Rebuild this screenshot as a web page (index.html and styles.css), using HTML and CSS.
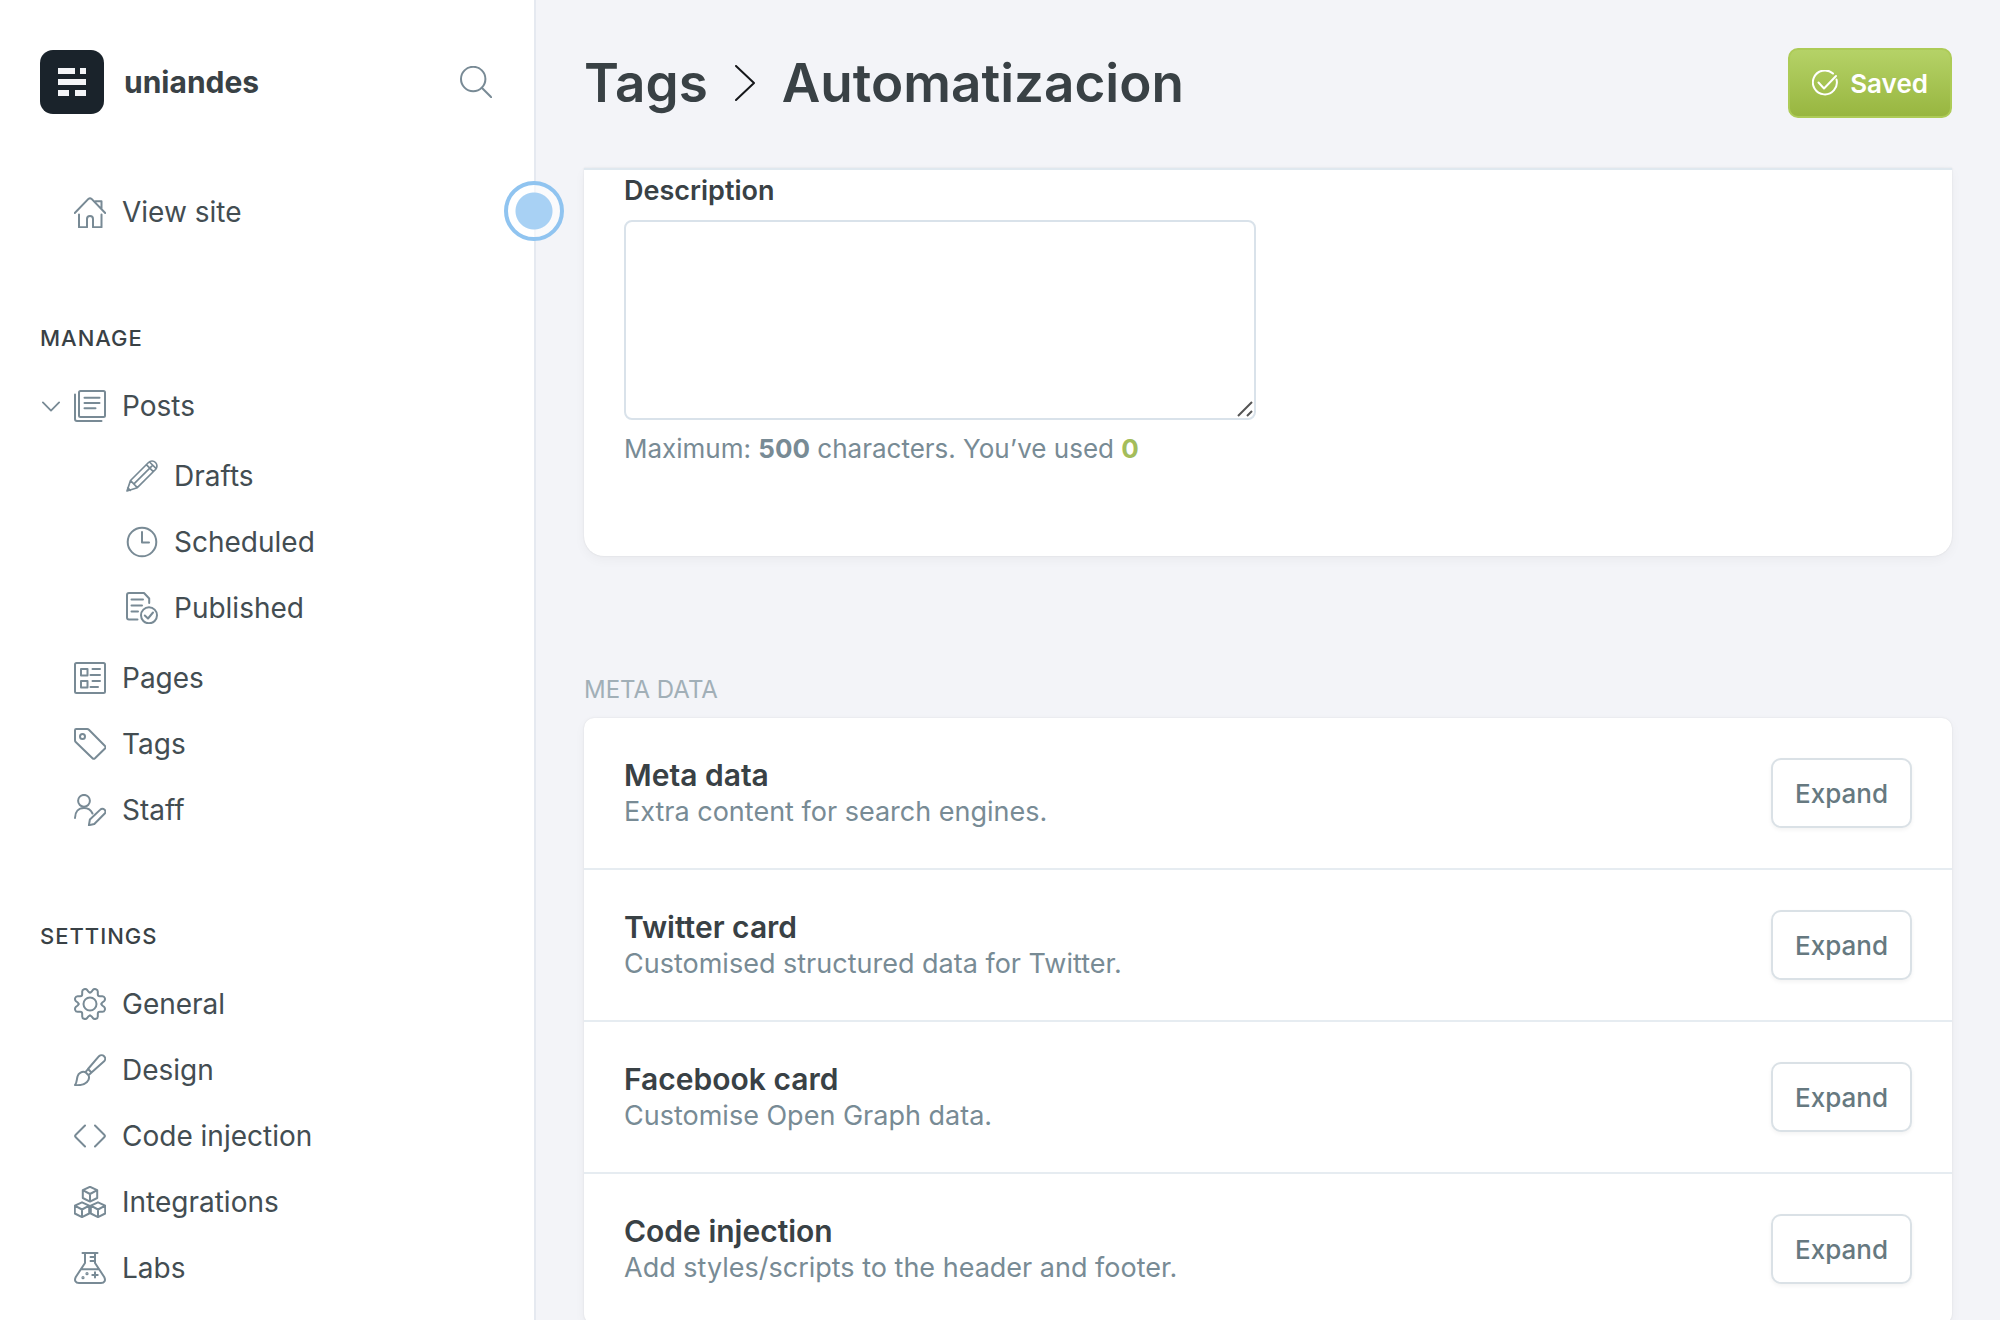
FILE: index.html
```html
<!DOCTYPE html>
<html lang="en">
<head>
<meta charset="utf-8">
<title>Tags - Automatizacion</title>
<link rel="stylesheet" href="styles.css">
</head>
<body>
<div class="app">
  <aside class="sidebar">
    <header class="brand">
      <svg class="brand-logo" viewBox="0 0 64 64" aria-hidden="true"><rect width="64" height="64" rx="13" fill="#1a232b"/><path fill="#f4f5f8" d="M18 18h17v6H18zM40 18h6v6h-6zM18 29h28v6H18zM18 40h11v6H18zM35 40h11v6H35z"/></svg>
      <span class="brand-name">uniandes</span>
      <button class="search" type="button" aria-label="Search"><svg class="icon" viewBox="0 0 32 32"><circle cx="13.2" cy="13" r="12.2"/><path d="M21.8 21.8l10 10"/></svg></button>
    </header>
    <nav>
      <ul class="menu">
        <li><a class="item" href="#"><svg class="icon" viewBox="0 0 32 32"><path d="M.8 17L14.4 2.9q1.6-1.4 3.2 0L31.2 17M21.5 5.2h6V13M5 18.5v12.7h8V23a3 3 0 0 1 6 0v8.200h8.500V18.500"/></svg>View site</a></li>
      </ul>
      <h2 class="menu-title">Manage</h2>
      <ul class="menu">
        <li>
          <div class="group">
            <button class="toggle" type="button" aria-label="Toggle posts"><svg class="chevron-down" viewBox="0 0 20 12"><path d="M1 1.500l9 9 9-9"/></svg></button>
            <a class="item" href="#"><svg class="icon" viewBox="0 0 32 32"><rect x="5" y="1" width="26" height="26" rx="1.500"/><path d="M1 4.500V29a2 2 0 0 0 2 2h24.500M10.500 7.800h15M10.500 13h15M10.500 18.300h11"/></svg>Posts</a>
          </div>
          <ul class="submenu">
            <li><a class="item" href="#"><svg class="icon icon-fine" viewBox="0 0 32 32"><path d="M1 31l3.500-10.500L22.500 2.500a4.600 4.600 0 0 1 7 7L11.300 27.700zM4.500 20.500l6.800 7.200M8.200 23.700L25.800 6.200M20.300 4.700l7 7M23.500 2l6.700 6.700M1.800 27.800l2.500 2.500"/></svg>Drafts</a></li>
            <li><a class="item" href="#"><svg class="icon" viewBox="0 0 32 32"><circle cx="16" cy="16" r="14.300"/><path d="M16 6v10.500h7"/></svg>Scheduled</a></li>
            <li><a class="item" href="#"><svg class="icon" viewBox="0 0 32 32"><path d="M23.200 11V6.500L18 1H3a2 2 0 0 0-2 2v22.500a2 2 0 0 0 2 2h8.500M5.500 7.600h11.500M5.500 13.500h10.500M5.500 19.500h6.500M18.800 23.500l3.200 3 5-6"/><circle cx="23" cy="23.300" r="8"/></svg>Published</a></li>
          </ul>
        </li>
        <li><a class="item" href="#"><svg class="icon" viewBox="0 0 32 32"><rect x="1" y="1" width="30" height="30" rx="1.500"/><path d="M7 7h6.500v6.500H7zM7 19h6.500v6.500H7zM18.500 7h7.500M16.500 13h9.500M18.500 19h7.500M16.500 25h7.500"/></svg>Pages</a></li>
        <li><a class="item" href="#"><svg class="icon" viewBox="0 0 32 32"><path d="M1 2.200Q1 1 2.200 1h11q1 0 1.700.700L31 18q1 1.300 0 2.500L21 30.200q-1.300 1.200-2.500 0L1.700 14Q1 13.300 1 12.200z"/><circle cx="8.500" cy="8.500" r="2.500"/></svg>Tags</a></li>
        <li><a class="item" href="#"><svg class="icon" viewBox="0 0 32 32"><circle cx="10" cy="6.800" r="5.900"/><path d="M1 24c0-6 3.500-10 9-10 4 0 7 2 8.500 5.500M14.900 31.200l1-5.700L26.300 15.600a2.900 2.900 0 0 1 4.200 4.200L20.300 30z"/></svg>Staff</a></li>
      </ul>
      <h2 class="menu-title">Settings</h2>
      <ul class="menu">
        <li><a class="item" href="#"><svg class="icon" viewBox="0 0 32 32"><circle cx="16" cy="16" r="6.500"/><path id="gear" d="M16 4.600C16.800 4.600 17.300 4 17.800 3.400L18.800 2C20.500.100 23.800 1.200 23.800 3.600V6.300C23.800 7.500 24.500 8.200 25.700 8.200H28.400C30.800 8.200 31.900 11.500 30 13.200L28.600 14.200C28 14.700 27.400 15.200 27.400 16"/><use href="#gear" transform="rotate(90 16 16)"/><use href="#gear" transform="rotate(180 16 16)"/><use href="#gear" transform="rotate(270 16 16)"/></svg>General</a></li>
        <li><a class="item" href="#"><svg class="icon" viewBox="0 0 32 32"><path d="M14 15L25 2.200a3.600 3.600 0 0 1 5.100 5.100L17.500 18.500zM14 15l-2.500 3.200M17.500 18.500l-3 2.700M11.500 18.200C8 17 4.500 19 3.500 22.500 2.500 26 3 29 1 31c5 .500 9 0 12-3 2-2 2.500-4.500 1.500-6.800z"/></svg>Design</a></li>
        <li><a class="item" href="#"><svg class="icon" viewBox="0 0 32 32"><path d="M11 5.500L1.500 15q-.8 1 0 2L11 26.500M21 5.500l9.500 9.500q.8 1 0 2L21 26.500"/></svg>Code injection</a></li>
        <li><a class="item" href="#"><svg class="icon" viewBox="0 0 32 32"><path id="cube" d="M16 .8l7.200 3.400v7.800L16 15.600 8.800 12V4.200zM8.800 4.200L16 8l7.200-3.800M16 8v7.600"/><use href="#cube" x="-8" y="15.500"/><use href="#cube" x="8" y="15.500"/></svg>Integrations</a></li>
        <li><a class="item" href="#"><svg class="icon" viewBox="0 0 32 32"><path d="M8.500 1h15M11 1v10L1.800 25C0 28.500 1.500 31 5 31h22c3.500 0 5-2.500 3.200-6L21 11V1M6.800 17.200h18.400M16.500 5H21M16.500 9H21M21 20.200v5.400M18.300 22.900h5.400"/><circle cx="13" cy="21.700" r=".6"/><circle cx="9" cy="25.700" r=".6"/></svg>Labs</a></li>
      </ul>
    </nav>
    <span class="beacon"></span>
  </aside>
  <main class="main">
    <header class="page-head">
      <h1 class="page-title"><a href="#">Tags</a><svg class="chevron-right" viewBox="0 0 20 36" aria-hidden="true"><path d="M1 1l18 17L1 35"/></svg><span>Automatizacion</span></h1>
      <button class="btn btn-save" type="button"><svg class="save-icon" viewBox="0 0 26 26"><path d="M21 3.600A12 12 0 1 0 24.500 9.500M6.500 12.500l5.500 6L24 6"/></svg>Saved</button>
    </header>
    <section class="card card-form">
      <label class="label" for="description">Description</label>
      <div class="textarea-wrap">
        <textarea class="textarea" id="description"></textarea>
        <svg class="grip" viewBox="0 0 16 16" aria-hidden="true"><path d="M1 15L15 1M10 15l5-5"/></svg>
      </div>
      <p class="hint">Maximum: <b>500</b> characters. You’ve used <b class="count">0</b></p>
    </section>
    <h2 class="section-title">Meta data</h2>
    <section class="card">
      <div class="row"><div><h3 class="row-title">Meta data</h3><p class="row-text">Extra content for search engines.</p></div><button class="btn btn-plain" type="button">Expand</button></div>
      <div class="row"><div><h3 class="row-title">Twitter card</h3><p class="row-text">Customised structured data for Twitter.</p></div><button class="btn btn-plain" type="button">Expand</button></div>
      <div class="row"><div><h3 class="row-title">Facebook card</h3><p class="row-text">Customise Open Graph data.</p></div><button class="btn btn-plain" type="button">Expand</button></div>
      <div class="row"><div><h3 class="row-title">Code injection</h3><p class="row-text">Add styles/scripts to the header and footer.</p></div><button class="btn btn-plain" type="button">Expand</button></div>
    </section>
  </main>
</div>
</body>
</html>
```
FILE: styles.css
```css
* { box-sizing: border-box; margin: 0; padding: 0; }

body {
  font-family: Inter, "Liberation Sans", sans-serif;
  font-optical-sizing: none;
  font-variant-ligatures: none;
  font-size: 28px;
  color: #394145;
  background: #f3f4f8;
  -webkit-font-smoothing: antialiased;
}

ul { list-style: none; }
a { color: inherit; text-decoration: none; }
button { font: inherit; cursor: pointer; }
svg { display: block; flex: none; fill: none; stroke: currentColor; stroke-linecap: round; stroke-linejoin: round; }

.app { display: flex; height: 100vh; overflow: hidden; }

/* Sidebar */
.sidebar {
  position: relative;
  flex: none;
  width: 536px;
  background: #fff;
  border-right: 2px solid #e5e9f0;
}
.brand { display: flex; align-items: center; padding: 50px 42px 65px 40px; }
.brand-logo { width: 64px; height: 64px; stroke: none; }
.brand-name { flex: 1; margin-left: 20px; font-size: 30px; line-height: 36px; font-weight: 700; }
.search { background: none; border: 0; }
.icon { width: 32px; height: 32px; color: #788a95; stroke-width: 2; }
.icon-fine { stroke-width: 1.7; }
.item {
  display: flex;
  align-items: center;
  gap: 16px;
  height: 66px;
  padding-left: 74px;
  color: #434d52;
}
.menu-title {
  margin: 80px 0 22px 40px;
  font-size: 22px;
  line-height: 26px;
  font-weight: 500;
  letter-spacing: 1px;
  text-transform: uppercase;
}
.group { display: flex; align-items: center; padding-left: 42px; }
.group .item { padding-left: 12px; }
.toggle { width: 20px; background: none; border: 0; color: #788a95; }
.chevron-down { width: 18px; height: 11px; stroke-width: 2; }
.submenu { padding: 4px 0; }
.submenu .item { padding-left: 126px; }
.beacon {
  position: absolute;
  top: 181px;
  right: -30px;
  width: 60px;
  height: 60px;
  border: 4px solid #90c4f0;
  border-radius: 50%;
  background: radial-gradient(circle, #a8d1f4 18px, rgba(255, 255, 255, .6) 19px);
}

/* Main column */
.main { flex: 1; min-width: 0; padding: 0 48px; }
.page-head { display: flex; align-items: center; justify-content: space-between; height: 168px; padding-bottom: 2px; }
.page-title { display: flex; align-items: center; gap: 27px; font-size: 53px; line-height: 64px; font-weight: 600; }
.chevron-right { width: 20px; height: 36px; color: #15171a; stroke-width: 2; }

.btn {
  display: flex;
  align-items: center;
  height: 70px;
  padding: 0 22px;
  border: 2px solid #dae1e6;
  border-radius: 10px;
  font-size: 26px;
  font-weight: 500;
}
.btn-save {
  gap: 12px;
  border-color: #adcb57;
  background: linear-gradient(#b5d267, #98b640);
  color: #fff;
  font-weight: 600;
}
.save-icon { width: 26px; height: 26px; stroke-width: 2; }
.btn-plain { background: #fff; color: #667980; box-shadow: 0 2px 4px rgba(0, 0, 0, .05); }

.card {
  background: #fff;
  border-radius: 10px;
  box-shadow: 0 0 2px rgba(0, 0, 0, .1), 0 4px 12px rgba(0, 0, 0, .04);
}
.card-form {
  padding: 4px 40px 90px;
  border-top: 2px solid #dfe8ef;
  border-radius: 0 0 20px 20px;
}
.label { display: block; margin-bottom: 12px; font-size: 27px; line-height: 34px; font-weight: 600; }
.textarea-wrap { position: relative; max-width: 632px; }
.textarea {
  display: block;
  width: 100%;
  height: 200px;
  padding: 12px 20px;
  border: 2px solid #d9e2ea;
  border-radius: 8px;
  background: #fff;
  font: inherit;
  resize: none;
}
.grip { position: absolute; right: 3px; bottom: 3px; width: 16px; height: 16px; color: #555; stroke-width: 2; stroke-linecap: butt; }
.hint { margin-top: 12px; font-size: 26px; line-height: 34px; color: #788b95; }
.hint .count { color: #a4bd5b; }

.section-title {
  margin: 118px 0 12px;
  font-size: 24px;
  line-height: 32px;
  font-weight: 400;
  color: #a1afb7;
  text-transform: uppercase;
}
.row { display: flex; align-items: center; justify-content: space-between; padding: 38px 40px; }
.row + .row { border-top: 2px solid #e6ecf1; }
.row-title { font-size: 30px; line-height: 38px; font-weight: 600; }
.row-text { font-size: 27px; line-height: 36px; color: #788b95; }
```
